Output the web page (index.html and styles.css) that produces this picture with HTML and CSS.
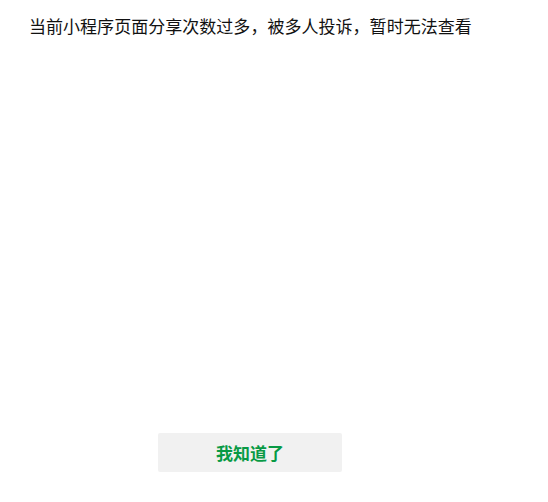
FILE: index.html
```html
<!DOCTYPE html>
<html lang="zh-CN">
<head>
    <meta charset="UTF-8">
    <meta name="viewport" content="width=device-width, initial-scale=1.0">
    <title>提示</title>
    <link rel="stylesheet" href="styles.css">
</head>
<body>
    <div class="page">
        <p class="notice">当前小程序页面分享次数过多，被多人投诉，暂时无法查看</p>
        <div class="actions">
            <button class="ok-button" id="okButton">我知道了</button>
        </div>
    </div>
</body>
</html>
```

FILE: styles.css
```css
body {
    margin: 0;
    background-color: #fff;
    font-family: 'Noto Sans CJK SC', 'Noto Sans', sans-serif;
}
.page {
    height: 502px;
    display: flex;
    flex-direction: column;
    box-sizing: border-box;
    padding: 14px 0 30px 29px;
}
.notice {
    margin: 0;
    font-size: 17px;
    line-height: 24px;
    color: #111;
    letter-spacing: 0.03px;
}
.actions {
    margin-top: auto;
    padding-left: 129px;
}
.ok-button {
    width: 184px;
    height: 39px;
    border: none;
    border-radius: 2px;
    background-color: #f1f1f1;
    color: #089a45;
    font-family: inherit;
    font-size: 17px;
    font-weight: bold;
    cursor: pointer;
}
```
